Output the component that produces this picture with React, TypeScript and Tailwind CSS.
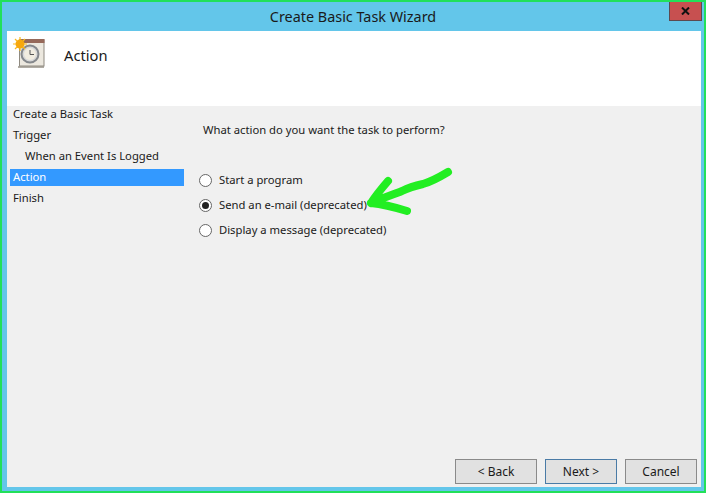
import React from "react";

function WizardIcon() {
  return (
    <svg width="34" height="34" viewBox="0 0 34 34" className="shrink-0">
      <rect x="5" y="29" width="26" height="2" fill="#b0aca4" />
      <rect x="6.500" y="3" width="24.500" height="26" fill="#ece8df" stroke="#8f8a80" />
      <rect x="6.500" y="2" width="25" height="4" fill="#96695a" />
      <circle cx="17" cy="17" r="8.500" fill="#d8d8d8" stroke="#85888c" strokeWidth="2" />
      <circle cx="17" cy="17" r="6" fill="#f1ece0" />
      <path d="M17 13v4.500h4" fill="none" stroke="#555" strokeWidth="1" />
      <circle cx="7" cy="7" r="4.500" fill="#f7a80d" />
      <path d="M7 0v3M7 11v3M0 7h3M11 7h3M2 2l2 2M10 10l2 2M12 2l-2 2M2 12l2-2" stroke="#f9b91c" strokeWidth="1.2" />
    </svg>
  );
}

function StepItem({ label, active, indent }: { label: string; active?: boolean; indent?: boolean }) {
  return (
    <div className={`h-[17px] flex items-center mb-1 ${active ? "bg-[#3399ff] text-white" : "text-[#1a1a1a]"} ${indent ? "pl-[15px]" : "pl-[3px]"}`}>
      {label}
    </div>
  );
}

function RadioOption({ label, checked }: { label: string; checked?: boolean }) {
  return (
    <div className="flex items-center gap-[7px] h-[13px] mb-3 last:mb-0">
      <div className="size-[13px] rounded-full border border-[#666] bg-white flex items-center justify-center shrink-0">
        {checked && <div className="size-[7px] rounded-full bg-[#222]" />}
      </div>
      <span className="text-[#1a1a1a] whitespace-nowrap">{label}</span>
    </div>
  );
}

function WizardButton({ label, width, focused }: { label: string; width: string; focused?: boolean }) {
  return (
    <button className={`h-[25px] ${width} bg-[#e1e1e1] border ${focused ? "border-[#4a7ba6]" : "border-[#8a8a8a]"} text-[12px] text-[#1a1a1a] text-center`}>
      {label}
    </button>
  );
}

export default function App() {
  return (
    <div className="relative w-[706px] h-[493px] border-2 border-[#22e05a] bg-[#63c6ea] flex flex-col overflow-hidden font-['Noto_Sans',sans-serif] text-[11.25px]">
      {/* Title bar */}
      <div className="relative h-[29px] shrink-0 flex items-center justify-center text-[14.4px] text-[#1a1a1a]">
        Create Basic Task Wizard
        <div className="absolute right-[2px] top-0 h-[19px] w-[33px] bg-[#c75050] border border-[#5c4a50] border-t-0 flex items-center justify-center">
          <svg width="9" height="8" viewBox="0 0 9 8">
            <path d="M1 0.500l7 7M8 0.500l-7 7" stroke="#111" strokeWidth="2" fill="none" />
          </svg>
        </div>
      </div>

      {/* Client area */}
      <div className="flex-1 ml-[5px] mr-[3px] mb-[4px] bg-[#f0f0f0] flex flex-col min-h-0">
        <div className="h-[75px] bg-white shrink-0 flex items-start pl-[6px] pt-[6px]">
          <WizardIcon />
          <span className="ml-[17px] mt-[7px] text-[14.7px] text-[#1a1a1a]">Action</span>
        </div>

        <div className="flex-1 flex min-h-0">
          <div className="w-[174px] ml-[3px] shrink-0 mr-[19px]">
            <StepItem label="Create a Basic Task" />
            <StepItem label="Trigger" />
            <StepItem label="When an Event Is Logged" indent />
            <StepItem label="Action" active />
            <StepItem label="Finish" />
          </div>
          <div className="flex-1 pt-[15px]">
            <div className="text-[#1a1a1a] leading-[17px] mb-[36px]">What action do you want the task to perform?</div>
            <div className="-ml-[4px]">
              <RadioOption label="Start a program" />
              <RadioOption label="Send an e-mail (deprecated)" checked />
              <RadioOption label="Display a message (deprecated)" />
            </div>
          </div>
        </div>

        <div className="flex justify-end gap-2 pr-[4px] pb-[3px] shrink-0">
          <WizardButton label="< Back" width="w-[82px]" />
          <WizardButton label="Next >" width="w-[72px]" focused />
          <WizardButton label="Cancel" width="w-[72px]" />
        </div>
      </div>

      {/* Hand-drawn arrow annotation */}
      <svg className="absolute left-[-2px] top-[-2px] pointer-events-none" width="706" height="493" viewBox="0 0 706 493">
        <path
          d="M448 172C438 178 430 182 423 184C414 186 408 188 402 191C392 195 380 199 371 203M388 181C382 188 376 195 371 203C381 204 394 207 407 211"
          fill="none"
          stroke="#22ee22"
          strokeWidth="8"
          strokeLinecap="round"
          strokeLinejoin="round"
        />
      </svg>
    </div>
  );
}
